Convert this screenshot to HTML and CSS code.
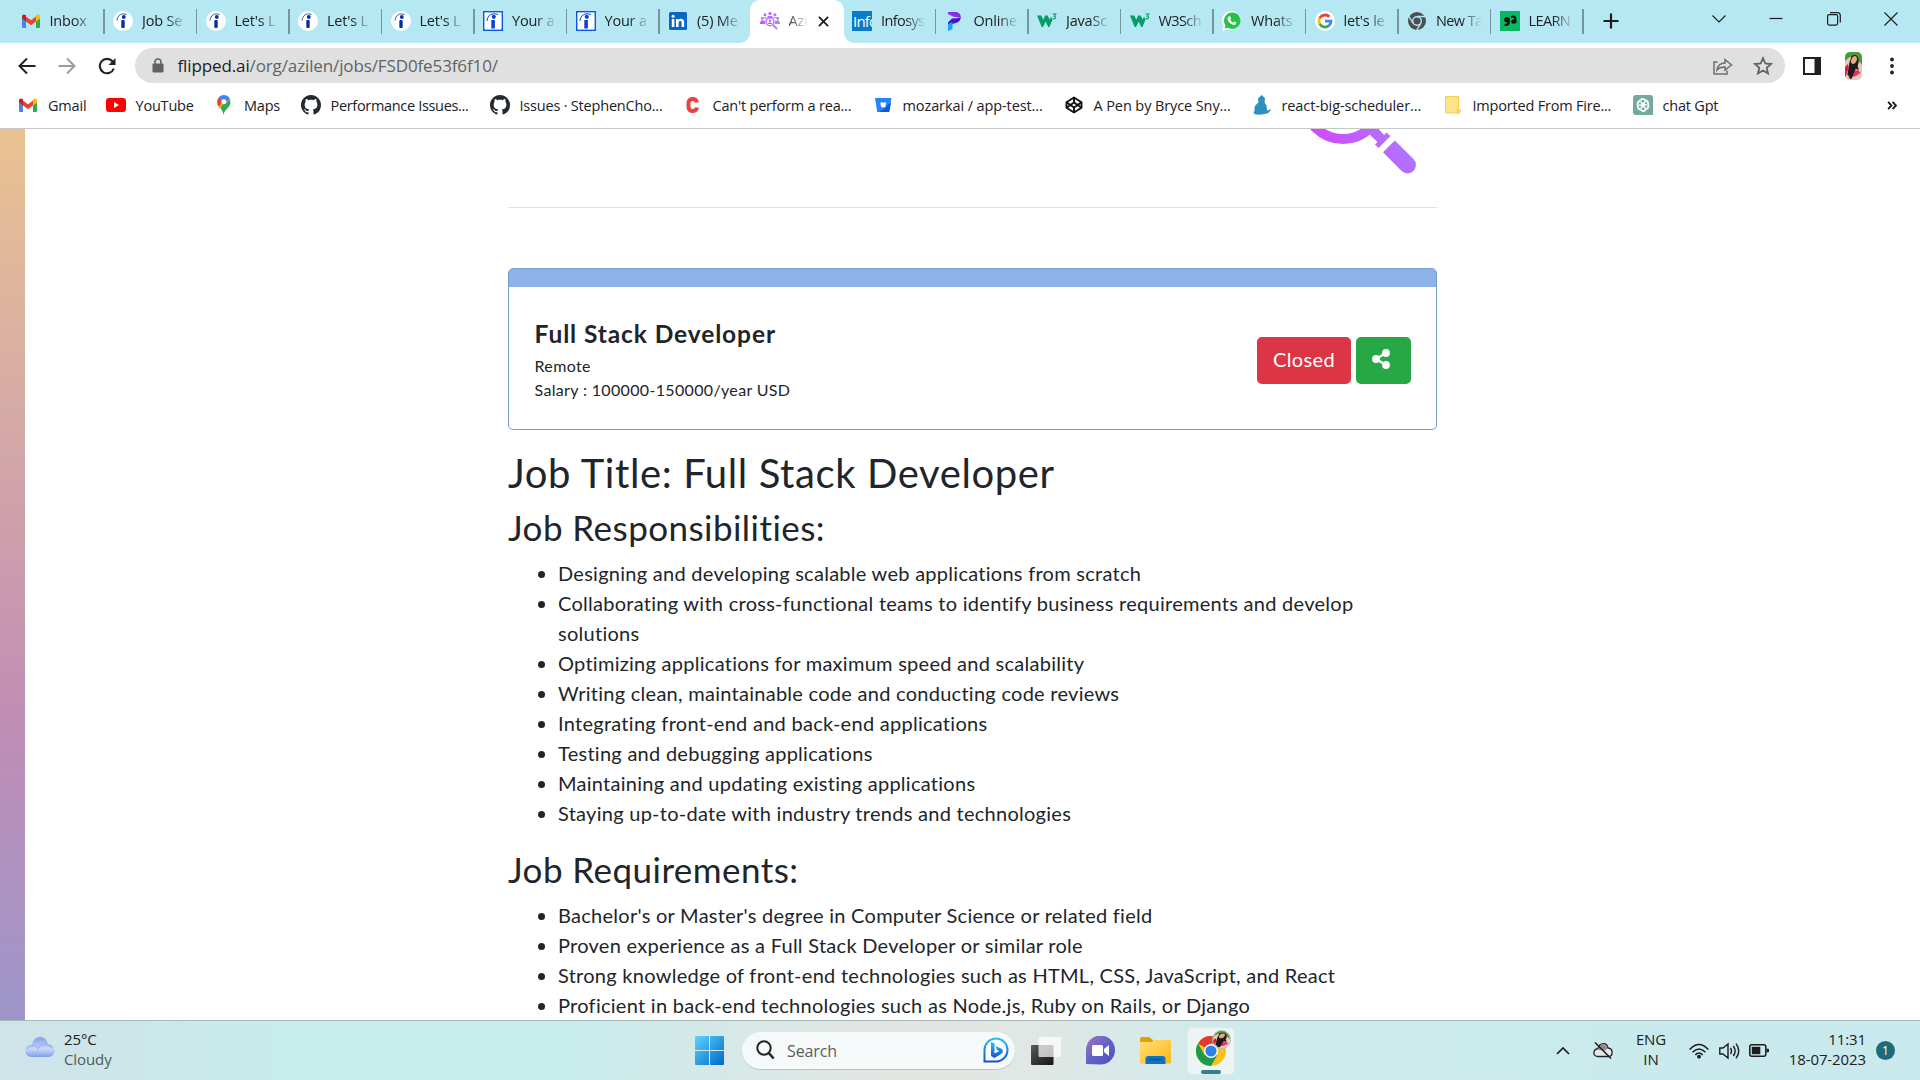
FILE: index.html
```html
<!DOCTYPE html>
<html lang="en">
<head>
<meta charset="utf-8">
<title>Azilen jobs</title>
<link rel="stylesheet" href="styles.css">
</head>
<body>
<svg class="defs" width="0" height="0" aria-hidden="true">
  <defs>
    <linearGradient id="gPink" x1="0" y1="0" x2="1" y2="0"><stop offset="0" stop-color="#e445ff"/><stop offset="1" stop-color="#7f9cff"/></linearGradient>
    <linearGradient id="gMag" gradientUnits="userSpaceOnUse" x1="1305" y1="165" x2="1400" y2="110"><stop offset="0" stop-color="#dc3cff"/><stop offset="1" stop-color="#a97cff"/></linearGradient>
    <linearGradient id="gCloud" x1="0" y1="0" x2="0" y2="1"><stop offset="0" stop-color="#7f9fe8"/><stop offset=".6" stop-color="#c9d9f8"/><stop offset="1" stop-color="#7ba0ea"/></linearGradient>
    <linearGradient id="gWin" x1="0" y1="0" x2="1" y2="1"><stop offset="0" stop-color="#5bd6ff"/><stop offset="1" stop-color="#0067c8"/></linearGradient>
    <linearGradient id="gBing" x1="0" y1="0" x2="0" y2="1"><stop offset="0" stop-color="#25c4ee"/><stop offset="1" stop-color="#174fcf"/></linearGradient>
    <linearGradient id="gChat" x1="0" y1="0" x2="1" y2="1"><stop offset="0" stop-color="#a173c4"/><stop offset=".5" stop-color="#6462c8"/><stop offset="1" stop-color="#4a4fbf"/></linearGradient>
    <linearGradient id="gFold" x1="0" y1="0" x2="1" y2="1"><stop offset="0" stop-color="#ffe07a"/><stop offset="1" stop-color="#fbb614"/></linearGradient>
    <linearGradient id="gDark" x1="0" y1="0" x2="1" y2="1"><stop offset="0" stop-color="#5a5a5a"/><stop offset="1" stop-color="#141414"/></linearGradient>
  </defs>
  <symbol id="gmail" viewBox="0 0 20 20">
    <path fill="#4285f4" d="M1 7l4 3v7H2.300Q1 17 1 15.700z"/><path fill="#34a853" d="M15 10l4-3v8.700Q19 17 17.700 17H15z"/>
    <path fill="#ea4335" d="M5 5.500l5 3.700 5-3.700v5l-5 3.800-5-3.800z"/><path fill="#c5221f" d="M1 5.500C1 3.300 3.200 2.700 5 4.300v6.200L1 7.500z"/>
    <path fill="#fbbc04" d="M19 5.500c0-2.200-2.200-2.800-4-1.200v6.200l4-3z"/>
  </symbol>
  <symbol id="indeed" viewBox="0 0 20 20">
    <circle cx="10" cy="10" r="10" fill="#fff"/><rect x="8.300" y="9" width="3.400" height="8" rx="1" fill="#0a2f9c"/><circle cx="10.800" cy="6" r="1.900" fill="#0a2f9c"/>
    <path d="M4 9.500C4.500 4 9 1.700 13.500 3.500" fill="none" stroke="#0a2f9c" stroke-width="1" opacity=".8"/>
  </symbol>
  <symbol id="indeedsq" viewBox="0 0 20 20">
    <rect x=".7" y=".7" width="18.600" height="18.600" fill="#fff" stroke="#0b55e8" stroke-width="1.400"/><rect x="8.300" y="9" width="3.600" height="8.500" fill="#0a45d8"/><circle cx="10.800" cy="5.800" r="2.100" fill="#0a45d8"/>
    <path d="M4 10C4.500 4 9 1.500 15 3.500" fill="none" stroke="#0a45d8" stroke-width="1"/>
  </symbol>
  <symbol id="linkedin" viewBox="0 0 20 20">
    <rect x="1" y="1" width="18" height="18" rx="1.500" fill="#0a66c2"/><path fill="#fff" d="M3.800 8h2.600v8H3.800zM8 8h2.500v1.200C11.800 7 16.200 7.300 16.200 11v5h-2.600v-4.300c0-2.400-3-2.200-3 0V16H8z"/><circle cx="5.100" cy="5.200" r="1.500" fill="#fff"/>
  </symbol>
  <symbol id="azilen" viewBox="0 0 20 20">
    <g fill="url(#gPink)"><circle cx="10" cy="2.600" r="1.700"/><circle cx="5" cy="3.700" r="1.500"/><circle cx="15" cy="3.700" r="1.500"/><circle cx="2.300" cy="7.300" r="1.400"/><circle cx="17.700" cy="7.300" r="1.400"/><path d="M0 13c0-2.500.7-3.700 2.500-3.800l2.500.8v3zM20 13c0-2.500-.7-3.700-2.500-3.800L15 10v3zM3.500 6h3L6 8zM13.500 6h3L14 8zM7.500 5h5v2h-5z"/></g>
    <circle cx="10" cy="10.800" r="4" fill="#fff" stroke="#b366ff" stroke-width="1.200"/><circle cx="10" cy="9.700" r="1.200" fill="#b366ff"/><path d="M7.700 13c.5-2 4.100-2 4.600 0z" fill="#d24cff"/><path d="M13 14l4 4" stroke="#a97cff" stroke-width="1.800"/>
  </symbol>
  <symbol id="programiz" viewBox="0 0 20 20">
    <path fill="#8a2be8" d="M3 1h7c4 0 6 2.500 5.800 6L8 5.500 3 3z"/><path fill="#4a12c8" d="M3 11.500l4-4L15.800 7c-.6 3-3 5-6.800 5.500L3 15z"/><path fill="#12a5f5" d="M3 13l4.500-2V18L3 20z"/>
  </symbol>
  <symbol id="w3" viewBox="0 0 20 20">
    <path fill="#059c68" d="M0 4.500h4.300l1.900 4.300 2-4.300h2.500l2 4.300 1.300-3.300 1.500 3-3 7.500h-1.300l-2.500-5.500L6 16H4.700z"/><path d="M15.500 3h3.300l-1.700 2.200c2.400.2 1.900 3.200-1.400 2.500" fill="none" stroke="#059c68" stroke-width="1.100"/>
  </symbol>
  <symbol id="whatsapp" viewBox="0 0 20 20">
    <path fill="#fff" d="M10 0a9.500 9.500 0 1 1-4.800 18.200L.2 20l1.500-5A9.500 9.500 0 0 1 10 0z"/><path fill="#25c244" d="M10.200 1.500a8.200 8.200 0 1 1-4.500 15L2.500 17.700l1-3.300a8.200 8.200 0 0 1 6.700-12.900z"/>
    <path fill="#fff" d="M7 5.300l1.400.2.700 2-.9 1.200c.7 1.500 1.700 2.300 3 2.900l1.100-1.100 2 .9c.1 2-1.700 2.900-3.200 2.400C8 12.800 6.300 10.800 5.700 8.500 5.400 7 6.100 5.900 7 5.300z"/>
  </symbol>
  <symbol id="google" viewBox="0 0 20 20">
    <circle cx="10" cy="10" r="10" fill="#fff"/><g fill="none" stroke-width="2.800"><path stroke="#ea4335" d="M14.300 5.800A6 6 0 0 0 4.700 7.200"/><path stroke="#fbbc04" d="M4.700 7.200a6 6 0 0 0 0 5.600"/><path stroke="#34a853" d="M4.700 12.800a6 6 0 0 0 9.200 1.800"/><path stroke="#4285f4" d="M13.900 14.600A6 6 0 0 0 16 10.200h-6"/></g>
  </symbol>
  <symbol id="chromegray" viewBox="0 0 20 20">
    <circle cx="10" cy="10" r="9" fill="#4b4f54"/><circle cx="10" cy="10" r="4.300" fill="#4b4f54" stroke="#b6e8f3" stroke-width="1.400"/><path d="M10 5.500h8.600M6 12.200L2 5.500M14 12.200l-4.300 7" stroke="#b6e8f3" stroke-width="1.300"/>
  </symbol>
  <symbol id="learn" viewBox="0 0 20 20">
    <rect width="20" height="20" fill="#07b763"/><g fill="none" stroke="#111" stroke-width="2.200"><circle cx="6.800" cy="8.700" r="1.500"/><path d="M8.700 7v4.500c0 2.300-2 2.500-4 2.500M11 6c3-1 4.300-.5 4.300 2v4.300"/><circle cx="13.300" cy="10.700" r="1"/></g>
  </symbol>
  <symbol id="youtube" viewBox="0 0 20 20"><rect y="3" width="20" height="14" rx="3" fill="#f00"/><path d="M8 7l5 3-5 3z" fill="#fff"/></symbol>
  <symbol id="maps" viewBox="0 0 20 20">
    <path fill="#34a853" d="M3.500 9c2 4 5.200 5 6 11 .8-6 7-7 7-13z"/><path fill="#fbbc04" d="M3.200 7.500L9 9l-3.300 5C4.500 12 3 10 3.200 7.500z"/><path fill="#ea4335" d="M5 2.200L9 7 5 11.500C2.500 8.500 2.800 4.500 5 2.200z"/><path fill="#4285f4" d="M4.800 2.300C8-1.200 14-.5 16 4l-6 5z"/><path fill="#34a853" d="M16 4c1.300 5-2.500 7-4.500 10L8 12z"/><circle cx="9.800" cy="6.700" r="2.500" fill="#fff"/>
  </symbol>
  <symbol id="github" viewBox="0 0 16 16"><path fill="#24292f" d="M8 0C3.580 0 0 3.580 0 8c0 3.540 2.290 6.530 5.470 7.590.4.070.55-.17.55-.38 0-.19-.01-.82-.01-1.490-2.010.37-2.530-.49-2.690-.94-.09-.23-.48-.94-.82-1.130-.28-.15-.68-.52-.01-.53.63-.01 1.080.58 1.230.82.72 1.210 1.870.87 2.330.66.07-.52.28-.87.51-1.070-1.780-.2-3.640-.89-3.640-3.950 0-.87.31-1.590.82-2.150-.08-.2-.36-1.020.08-2.120 0 0 .67-.21 2.200.82.64-.18 1.320-.27 2-.27s1.360.09 2 .27c1.530-1.040 2.200-.82 2.200-.82.44 1.100.16 1.920.08 2.120.51.560.82 1.270.82 2.150 0 3.070-1.870 3.750-3.650 3.950.29.25.54.73.54 1.480 0 1.070-.01 1.930-.01 2.200 0 .21.150.46.55.38A8.010 8.010 0 0 0 16 8c0-4.420-3.580-8-8-8z"/></symbol>
  <symbol id="cc" viewBox="0 0 20 20"><path d="M14 7.500C13.500 3 6 2.500 5.500 8v4c.5 5.500 8 5 8.500.5" fill="none" stroke="#ea4343" stroke-width="4"/></symbol>
  <symbol id="bitbucket" viewBox="0 0 20 20"><path fill="#2684ff" d="M2 3h16.500l-2.300 14H4.300z"/><path fill="#0b5bd3" d="M12.500 12L18 7.500 16.200 17H5z"/><path fill="#2684ff" d="M5 8h8.500l-1 5-6 4H4.300z"/><path fill="#fff" d="M7.300 7.500h5.900l-.9 4.800H8.200z"/></symbol>
  <symbol id="codepen" viewBox="0 0 20 20"><g fill="none" stroke="#111" stroke-width="1.900" stroke-linejoin="round"><path d="M10 2.500l7.500 4.700v5.600L10 17.500l-7.500-4.700V7.200z"/><path d="M2.500 7.200l7.500 5.300 7.500-5.300M2.500 12.800L10 7.500l7.500 5.300M10 2.500v5M10 12.500v5"/></g></symbol>
  <symbol id="rbs" viewBox="0 0 20 20"><path fill="#2e8fc0" d="M6 3.500L9.500 0l3 2.500c1.300 2-.5 3.500.3 5.500 1.700 2 2.500 4.500 2 7.500l4.700-1.200-3.500 4c-5 1.500-9.500 1.700-13.500 1L1.500 17c1.500-.5 1-1.500 1-4 .3-3 2.500-4 4-5.500z"/></symbol>
  <symbol id="folder" viewBox="0 0 20 20"><path fill="#ffe38a" stroke="#f3cb55" d="M2.500 1.500h13v13l2 1-1 2.500h-14z"/><path fill="#f8d25f" d="M13.500 18.500v-4.500h3.500v4.500z"/></symbol>
  <symbol id="gpt" viewBox="0 0 20 20"><path fill="#74aa9c" d="M3 0h14q3 0 3 3v17H3q-3 0-3-3V3q0-3 3-3z"/><g fill="none" stroke="#fff" stroke-width="1"><ellipse cx="8.200" cy="8.500" rx="3" ry="5.300" transform="rotate(25 8.200 8.500)"/><ellipse cx="11.800" cy="11.500" rx="3" ry="5.300" transform="rotate(25 11.800 11.500)"/><ellipse cx="10" cy="7.600" rx="3" ry="5.300" transform="rotate(85 10 7.600)"/><ellipse cx="10" cy="12.400" rx="3" ry="5.300" transform="rotate(85 10 12.400)"/><ellipse cx="12" cy="8.800" rx="3" ry="5.300" transform="rotate(-35 12 8.800)"/><ellipse cx="8" cy="11.200" rx="3" ry="5.300" transform="rotate(-35 8 11.200)"/></g></symbol>
  <symbol id="portrait" viewBox="0 0 18 28" preserveAspectRatio="none">
    <rect width="18" height="28" fill="#e0cfb4"/><path fill="#4e9a35" d="M0 0h18v13L12 6 5 5 0 9z"/><path fill="#231a1f" d="M7 4c5-3 8 1 7.500 6l-1 4 1 4-5-2-4 9-3-2 2-12z"/><ellipse cx="9.500" cy="8" rx="2.800" ry="4.200" fill="#e3aa8d" transform="rotate(25 9.500 8)"/><path fill="#e31b3c" d="M0 15l3-3 1 4-3.500 9H0z"/><path fill="#e8306b" d="M8 19l6-1 2.500 3-6 3.500H6z"/><path fill="#231a1f" d="M10 12l3 1-6 14-3-1z"/>
  </symbol>
</svg>

<header class="tabs">
  <div class="tab"><svg class="ico"><use href="#gmail"/></svg><span class="tab-title">Inbox</span></div>
  <div class="tab"><svg class="ico"><use href="#indeed"/></svg><span class="tab-title">Job Se</span></div>
  <div class="tab"><svg class="ico"><use href="#indeed"/></svg><span class="tab-title">Let's L</span></div>
  <div class="tab"><svg class="ico"><use href="#indeed"/></svg><span class="tab-title">Let's L</span></div>
  <div class="tab"><svg class="ico"><use href="#indeed"/></svg><span class="tab-title">Let's L</span></div>
  <div class="tab"><svg class="ico"><use href="#indeedsq"/></svg><span class="tab-title">Your a</span></div>
  <div class="tab"><svg class="ico"><use href="#indeedsq"/></svg><span class="tab-title">Your a</span></div>
  <div class="tab tab-last"><svg class="ico"><use href="#linkedin"/></svg><span class="tab-title">(5) Me</span></div>
  <div class="tab tab-active"><svg class="ico"><use href="#azilen"/></svg><span class="tab-title">Azi</span><svg class="tab-close" viewBox="0 0 12 12"><path d="M1 1l10 10M11 1L1 11" stroke="#1b1d1f" stroke-width="2"/></svg></div>
  <div class="tab"><span class="ico infosys">Info</span><span class="tab-title tight">Infosys</span></div>
  <div class="tab"><svg class="ico"><use href="#programiz"/></svg><span class="tab-title">Online</span></div>
  <div class="tab"><svg class="ico"><use href="#w3"/></svg><span class="tab-title">JavaSc</span></div>
  <div class="tab"><svg class="ico"><use href="#w3"/></svg><span class="tab-title tight">W3Sch</span></div>
  <div class="tab"><svg class="ico"><use href="#whatsapp"/></svg><span class="tab-title">Whats</span></div>
  <div class="tab"><svg class="ico"><use href="#google"/></svg><span class="tab-title">let's le</span></div>
  <div class="tab"><svg class="ico"><use href="#chromegray"/></svg><span class="tab-title tight">New Ta</span></div>
  <div class="tab"><svg class="ico"><use href="#learn"/></svg><span class="tab-title tight">LEARN</span></div>
  <svg class="newtab" viewBox="0 0 16 16"><path d="M8 .5v15M.5 8h15" stroke="#1b1d1f" stroke-width="2.200"/></svg>
  <div class="winctl">
    <svg width="14" height="14" viewBox="0 0 14 14"><path d="M.5 3.500L7 10l6.500-6.500"/></svg>
    <svg width="14" height="14" viewBox="0 0 14 14"><path d="M.5 6.500h13"/></svg>
    <svg width="14" height="14" viewBox="0 0 14 14"><rect x=".6" y="2.600" width="10" height="10.500" rx="1.500"/><path d="M3 .6h7.500q2.800 0 2.800 3v7"/></svg>
    <svg width="14" height="14" viewBox="0 0 14 14"><path d="M.5.5l13 13M13.500.5l-13 13"/></svg>
  </div>
</header>

<div class="toolbar">
  <svg class="nav" viewBox="0 0 18 18"><path d="M17.500 9H2M9 1.500L1.500 9 9 16.500" fill="none" stroke="#202124" stroke-width="2"/></svg>
  <svg class="nav" viewBox="0 0 18 18"><path d="M.5 9H16M9 1.500L16.500 9 9 16.500" fill="none" stroke="#9b9c9e" stroke-width="2"/></svg>
  <svg class="nav" viewBox="0 0 18 18"><path d="M15.800 11.500A7.200 7.200 0 1 1 14.600 4.500" fill="none" stroke="#202124" stroke-width="2.100"/><path d="M17.500 1v7h-7z" fill="#202124"/></svg>
  <div class="omnibox">
    <svg class="lock" viewBox="0 0 12 15"><rect x=".5" y="5.500" width="11" height="9" rx="1.200" fill="#5f6368"/><path d="M3 6V4q0-3 3-3t3 3v2" fill="none" stroke="#5f6368" stroke-width="1.600"/></svg>
    <span class="url"><b>flipped.ai</b>/org/azilen/jobs/FSD0fe53f6f10/</span>
    <svg class="share" viewBox="0 0 20 18"><path d="M4.500 5H1v12h13v-3.500M4 13c.8-5 4-7 8-7V2.500L18.500 8 12 13v-3c-3.500 0-6 .7-8 3z" fill="none" stroke="#6b6e72" stroke-width="1.500"/></svg>
    <svg class="star" viewBox="0 0 20 20"><path d="M10 2.200l2.300 5.300 5.800.5-4.400 3.800 1.300 5.700-5-3-5 3 1.300-5.700L1.900 8l5.800-.5z" fill="none" stroke="#5f6368" stroke-width="1.800"/></svg>
  </div>
  <svg class="panel" viewBox="0 0 18 18"><rect x="1" y="1" width="16" height="16" fill="none" stroke="#202124" stroke-width="2"/><path d="M11.500 1H17v16h-5.500z" fill="#202124"/></svg>
  <svg class="avatar"><use href="#portrait"/></svg>
  <svg class="dots" viewBox="0 0 4 18"><g fill="#202124"><circle cx="2" cy="2.500" r="1.900"/><circle cx="2" cy="9" r="1.900"/><circle cx="2" cy="15.500" r="1.900"/></g></svg>
</div>

<nav class="bookmarks">
  <span class="bm"><svg class="ico"><use href="#gmail"/></svg>Gmail</span>
  <span class="bm"><svg class="ico"><use href="#youtube"/></svg>YouTube</span>
  <span class="bm"><svg class="ico"><use href="#maps"/></svg>Maps</span>
  <span class="bm tight"><svg class="ico"><use href="#github"/></svg>Performance Issues...</span>
  <span class="bm"><svg class="ico"><use href="#github"/></svg>Issues · StephenCho...</span>
  <span class="bm"><svg class="ico"><use href="#cc"/></svg>Can't perform a rea...</span>
  <span class="bm loose"><svg class="ico"><use href="#bitbucket"/></svg>mozarkai / app-test...</span>
  <span class="bm loose"><svg class="ico"><use href="#codepen"/></svg>A Pen by Bryce Sny...</span>
  <span class="bm loose"><svg class="ico"><use href="#rbs"/></svg>react-big-scheduler...</span>
  <span class="bm"><svg class="ico"><use href="#folder"/></svg>Imported From Fire...</span>
  <span class="bm"><svg class="ico"><use href="#gpt"/></svg>chat Gpt</span>
  <svg class="more" viewBox="0 0 9 8"><path d="M1 .7L4 4 1 7.300M5 .7L8 4 5 7.300" fill="none" stroke="#202124" stroke-width="1.700"/></svg>
</nav>

<div class="viewport">
  <div class="strip"></div>
  <main class="page">
    <div class="hero">
      <svg class="magnifier" viewBox="1300 129 120 46">
        <circle cx="1343" cy="100.500" r="38.500" fill="none" stroke="url(#gMag)" stroke-width="10"/>
        <g fill="url(#gMag)"><path d="M1369 134l7-8 8 9 2.500-2.500 4 3.500-12 12-3.500-3.500 2.500-2.500z"/><path d="M1383 152.200l11.800-11.800 18.700 18.700a8.400 8.400 0 0 1-11.900 11.900z"/></g>
      </svg>
    </div>
    <section class="card">
      <div class="card-head"></div>
      <div class="card-body">
        <div class="job">
          <h5 class="job-name">Full Stack Developer</h5>
          <div class="meta">Remote</div>
          <div class="meta">Salary : 100000-150000/year USD</div>
        </div>
        <div class="actions">
          <button class="btn btn-closed">Closed</button>
          <button class="btn btn-share"><svg width="18" height="20" viewBox="0 0 18 20"><path d="M14 4L4 10l10 6" fill="none" stroke="#fff" stroke-width="2.600"/><g fill="#fff"><circle cx="14" cy="4" r="3.900"/><circle cx="4" cy="10" r="3.900"/><circle cx="14" cy="16" r="3.900"/></g></svg></button>
        </div>
      </div>
    </section>
    <article class="desc">
      <h1>Job Title: Full Stack Developer</h1>
      <h2>Job Responsibilities:</h2>
      <ul>
        <li>Designing and developing scalable web applications from scratch</li>
        <li>Collaborating with cross-functional teams to identify business requirements and develop solutions</li>
        <li>Optimizing applications for maximum speed and scalability</li>
        <li>Writing clean, maintainable code and conducting code reviews</li>
        <li>Integrating front-end and back-end applications</li>
        <li>Testing and debugging applications</li>
        <li>Maintaining and updating existing applications</li>
        <li>Staying up-to-date with industry trends and technologies</li>
      </ul>
      <h2 class="req">Job Requirements:</h2>
      <ul>
        <li>Bachelor's or Master's degree in Computer Science or related field</li>
        <li>Proven experience as a Full Stack Developer or similar role</li>
        <li>Strong knowledge of front-end technologies such as HTML, CSS, JavaScript, and React</li>
        <li>Proficient in back-end technologies such as Node.js, Ruby on Rails, or Django</li>
      </ul>
    </article>
  </main>
</div>

<footer class="taskbar">
  <div class="weather">
    <svg width="30" height="20" viewBox="0 0 30 20"><path fill="url(#gCloud)" d="M7 20c-9 0-9-12 0-12C8-2 21-3 23 7c9 0 9 13 0 13z"/><path d="M2 12c3-5 9-4 11 0 2-5 9-7 14-1" fill="none" stroke="#8caaf0" stroke-width="1.500" opacity=".6"/></svg>
    <div class="two-line"><span>25°C</span><span class="muted">Cloudy</span></div>
  </div>
  <div class="apps">
    <svg width="29" height="29" viewBox="0 0 29 29"><path fill="url(#gWin)" d="M1 0h13v14H0V1q0-1 1-1zM15 0h13q1 0 1 1v13H15zM0 15h14v14H1q-1 0-1-1zM15 15h14v13q0 1-1 1H15z"/></svg>
    <div class="search">
      <svg width="19" height="20" viewBox="0 0 19 20"><circle cx="8" cy="8" r="6.700" fill="none" stroke="#252525" stroke-width="2"/><path d="M12.700 13l5 5.500" stroke="#252525" stroke-width="2.600"/></svg>
      <span>Search</span>
      <svg class="bing" width="26" height="26" viewBox="0 0 26 26"><path d="M1.500 24.500V13A11.500 11.500 0 1 1 13 24.500z" fill="#f7fbfd" stroke="url(#gBing)" stroke-width="2"/><path fill="url(#gBing)" d="M8 5l3.500 1.500v10l5-2.500-2.500-1-1.500-4 6.500 3q2 3-1 5l-6.500 4L8 19z"/></svg>
    </div>
    <svg width="30" height="28" viewBox="0 0 30 28"><rect y="8" width="22.500" height="20" rx="1" fill="url(#gDark)"/><rect x="7.500" width="22.500" height="20" rx="1" fill="#fff" opacity=".72"/></svg>
    <svg width="29" height="29" viewBox="0 0 29 29"><path fill="url(#gChat)" d="M0 28V14.500A14.500 14.500 0 1 1 14.500 28.500z"/><rect x="6" y="9" width="11" height="11" rx="1.500" fill="#fff"/><path fill="#fff" d="M18 13l5-4v11l-5-4z"/></svg>
    <svg width="31" height="27" viewBox="0 0 31 27"><path fill="#dea107" d="M0 2q0-2 2-2h7l4 3v3H0z"/><path fill="url(#gFold)" d="M0 5h12l2-2h17v22q0 1.500-1.500 1.500h-28Q0 26.500 0 25z"/><path fill="#0f72c9" d="M5.500 27v-5q0-3 3-3h14q3 0 3 3v5z"/><path d="M9 22.500h13" stroke="#0a4f93" stroke-width="1.500"/></svg>
    <div class="tile">
      <svg width="30" height="30" viewBox="0 0 30 30"><circle cx="15" cy="15" r="15" fill="#fbc116"/><path fill="#e33b2e" d="M15 15L2 7.500A15 15 0 0 1 28 7.500H15z"/><path fill="#1f9b4b" d="M2 7.500A15 15 0 0 0 15 30l6.500-11.300L15 15 8.500 18.700z"/><circle cx="15" cy="15" r="7" fill="#fff"/><circle cx="15" cy="15" r="5.600" fill="#2f80f3"/></svg>
      <span class="mini"><svg width="17" height="17"><use href="#portrait"/></svg></span>
      <span class="running"></span>
    </div>
  </div>
  <div class="tray">
    <svg class="t-chev" width="14" height="8" viewBox="0 0 14 8"><path d="M1 7l6-6 6 6" fill="none" stroke="#1c1c1c" stroke-width="1.700"/></svg>
    <svg class="t-cloud" width="20" height="17" viewBox="0 0 20 17"><path fill="#e8e8e8" stroke="#222" stroke-width="1.300" d="M5 14.500c-5.500 0-5.500-7 0-8C6.500 0 14 0 15 6c5.500.5 5.500 8.500 0 8.500z"/><path fill="#8b8b8b" d="M5 7.500C6.500 1 13 1 14.300 6.700L11 9z"/><path d="M2 .5L18 16.500" stroke="#222" stroke-width="1.500"/></svg>
    <div class="two-line lang"><span>ENG</span><span>IN</span></div>
    <svg class="t-wifi" width="20" height="16" viewBox="0 0 20 16"><g fill="none" stroke="#1c1c1c" stroke-width="1.500"><path d="M.6 6.500Q10-3.500 19.400 6.500M3.500 9.300Q10 2.500 16.500 9.300M6.300 12Q10 8.200 13.700 12"/></g><circle cx="10" cy="13.700" r="1.900" fill="#1c1c1c"/></svg>
    <svg class="t-vol" width="21" height="18" viewBox="0 0 21 18"><g fill="none" stroke="#1c1c1c" stroke-width="1.400"><path d="M.8 6v6H4l5 4V2L4 6zM11.500 6q2 3 0 6M14.300 4q3.700 5 0 10M17 1.700q5.500 7.300 0 14.600"/></g></svg>
    <svg class="t-bat" width="20" height="13" viewBox="0 0 20 13"><rect x=".8" y=".8" width="16" height="11.400" rx="2" fill="none" stroke="#1c1c1c" stroke-width="1.500"/><rect x="2.800" y="2.800" width="8.500" height="7.400" fill="#1c1c1c"/><path d="M17.500 4.500l2.500.5v3l-2.500.5z" fill="#1c1c1c"/></svg>
    <div class="two-line clock"><span>11:31</span><span>18-07-2023</span></div>
    <span class="badge">1</span>
  </div>
</footer>
</body>
</html>
```
FILE: styles.css
```css
* { box-sizing: border-box; }
body {
  margin: 0;
  width: 1920px;
  height: 1080px;
  overflow: hidden;
  display: flex;
  flex-direction: column;
  background: #fff;
  font-family: "Open Sans", "Noto Sans", sans-serif;
  font-size: 14.5px;
  letter-spacing: -0.2px;
  color: #202124;
}
svg { display: block; flex: none; }
.defs { position: absolute; }
.ico { width: 20px; height: 20px; flex: none; }

/* Tab strip */
.tabs {
  display: flex;
  height: 43px;
  flex: none;
  padding-left: 11px;
  background: #b6e8f3;
}
.tab {
  position: relative;
  width: 92.5px;
  flex: none;
  display: flex;
  align-items: center;
  gap: 9px;
  padding: 0 8px 1px 9.5px;
}
.tab::after {
  content: "";
  position: absolute;
  right: -1px;
  top: 9px;
  width: 1.5px;
  height: 25px;
  background: #76969f;
}
.tab-last::after, .tab-active::after { display: none; }
.tab-title {
  flex: 1;
  padding-bottom: 1px;
  white-space: nowrap;
  -webkit-mask-image: linear-gradient(90deg, #000 calc(100% - 22px), transparent calc(100% - 1px));
  mask-image: linear-gradient(90deg, #000 calc(100% - 22px), transparent calc(100% - 1px));
}
.tab-title.tight { letter-spacing: -0.6px; }
.tab-active {
  background: #fff;
  border-radius: 10px 10px 0 0;
  width: 94px;
  margin-right: -1.5px;
  margin-left: -1px;
  padding-right: 15px;
}
.tab-active::before {
  content: "";
  position: absolute;
  left: -10px;
  right: -10px;
  bottom: 0;
  height: 10px;
  background:
    radial-gradient(circle at 0 0, transparent 9.5px, #fff 10px) left / 10px 10px no-repeat,
    radial-gradient(circle at 100% 0, transparent 9.5px, #fff 10px) right / 10px 10px no-repeat;
}
.tab-close { width: 11px; height: 11px; }
.infosys {
  background: #0a7cc5;
  color: #fff;
  font: 15px/20px "Open Sans", sans-serif;
  letter-spacing: -0.8px;
  overflow: hidden;
  padding-left: 1px;
}
.newtab { width: 16px; height: 16px; margin: 13px 0 0 20px; }
.winctl {
  display: flex;
  gap: 43.4px;
  margin: 12px 22px 0 auto;
  fill: none;
  stroke: #1d1f20;
  stroke-width: 1.2;
}

/* Toolbar */
.toolbar {
  display: flex;
  align-items: center;
  height: 45px;
  flex: none;
  padding: 0 26px 0 18px;
}
.nav { width: 18px; height: 18px; margin-right: 22px; }
.omnibox {
  display: flex;
  align-items: center;
  width: 1650px;
  height: 35px;
  margin-left: -3px;
  padding: 0 12px 0 17px;
  border-radius: 18px;
  background: #e0e0e0;
}
.lock { width: 12px; height: 15px; }
.url {
  flex: 1;
  margin-left: 13.5px;
  font-size: 17px;
  letter-spacing: -0.12px;
  color: #5f6368;
}
.url b { font-weight: 400; color: #202124; }
.share { width: 20px; height: 18px; margin-right: 20px; }
.star { width: 20px; height: 20px; }
.panel { width: 18px; height: 18px; margin-left: 18px; }
.avatar { width: 17px; height: 28px; margin-left: 24px; border-radius: 5px; }
.dots { width: 4px; height: 18px; margin-left: auto; }

/* Bookmarks bar */
.bookmarks {
  display: grid;
  grid-template-columns: 87.5px 108.5px 86.5px 189px 193px 190px 191px 188px 191px 190px 254px auto;
  align-items: center;
  height: 41px;
  flex: none;
  padding: 0 0 6px 18px;
  border-bottom: 1px solid #c8c8c8;
}
.bm { display: flex; align-items: center; gap: 10px; white-space: nowrap; }
.bm.tight { letter-spacing: -0.32px; }
.bm.loose { letter-spacing: -0.1px; }
.more { width: 10px; height: 9px; }

/* Page */
.viewport { display: flex; height: 891px; overflow: hidden; }
.strip {
  width: 25px;
  flex: none;
  background: linear-gradient(#eac291, #d6aca5 30%, #bf8db5 67%, #9d96ca);
}
.page {
  width: 929px;
  margin-left: 483px;
  font-family: Lato, "Noto Sans", sans-serif;
  letter-spacing: 0.27px;
  color: #212529;
}
.hero {
  display: flex;
  justify-content: flex-end;
  height: 79px;
  border-bottom: 1px solid #e3e3e3;
}
.magnifier { width: 120px; height: 46px; margin-right: 17px; }
.card {
  height: 162px;
  margin-top: 60px;
  border: 1px solid #7a9ccb;
  border-radius: 5px;
  overflow: hidden;
}
.card-head { height: 18px; background: #8cb2e7; }
.card-body {
  display: flex;
  justify-content: space-between;
  padding: 32px 25px 0 25.5px;
}
.job-name {
  margin: 0 0 5px;
  font-size: 24.5px;
  line-height: 30px;
  font-weight: 700;
  letter-spacing: 0.9px;
}
.meta { font-size: 16px; line-height: 24px; letter-spacing: 0.34px; }
.actions { display: flex; gap: 5px; padding-top: 18px; }
.btn {
  height: 47px;
  border: 0;
  border-radius: 5px;
  padding: 0 0 4px;
  color: #fff;
  font: 20px Lato, sans-serif;
  letter-spacing: 0.35px;
}
.btn-closed { width: 94px; background: #dc3545; }
.btn-share { width: 55px; background: #28a745; padding: 0 0 3px 16px; }
h1, h2 { margin: 0 0 10px; font-weight: 400; line-height: 1.2; }
h1 { margin-bottom: 9px; font-size: 40px; letter-spacing: 0.6px; }
h2 { font-size: 35px; letter-spacing: 0.45px; }
.desc { padding-top: 19px; }
.req { margin-top: 20px; }
ul { margin: 0; padding-left: 50px; font-size: 20px; line-height: 30px; }

/* Taskbar */
.taskbar {
  position: relative;
  display: grid;
  grid-template-columns: 695px 1fr auto;
  height: 60px;
  flex: none;
  border-top: 1px solid #a6b8b8;
  background: linear-gradient(90deg, #cfe3e8, #c8ebec 14%, #c9ecec 30%, #e3e5e2 46%, #e0e7e4 54%, #cdebed 65%, #c9e9ec);
  font-size: 15px;
  letter-spacing: -0.1px;
}
.weather { display: flex; gap: 9px; padding: 8px 0 0 25px; }
.weather svg { margin-top: 8px; }
.two-line { display: flex; flex-direction: column; line-height: 20px; }
.muted { color: #4d5c5e; }
.apps { display: flex; align-items: center; }
.apps > svg { margin-right: 25px; }
.apps > svg:first-child { margin-right: 18px; }
.search {
  display: flex;
  align-items: center;
  width: 273px;
  height: 38px;
  margin-right: 16px;
  padding: 0 6px 0 14px;
  border-radius: 19px;
  border-bottom: 1px solid #b9c1c0;
  background: #f5f9f9;
  font-size: 16px;
  color: #5a5d5d;
}
.search span { margin-left: 12px; flex: 1; padding-top: 1px; }
.tile {
  position: relative;
  width: 48px;
  height: 48px;
  margin-left: -9px;
  padding: 9px;
  border-radius: 5px;
  border: 1px solid #e1eaea;
  background: #edf4f4;
}
.tile > svg { margin: -1px; }
.mini {
  position: absolute;
  left: 24px;
  top: 2px;
  width: 19px;
  height: 19px;
  border-radius: 50%;
  border: 1px solid #b9b9b9;
  overflow: hidden;
}
.running {
  position: absolute;
  left: 13px;
  bottom: 0;
  width: 20px;
  height: 4px;
  border-radius: 2px;
  background: #2c8290;
}
.tray { display: flex; align-items: center; padding-right: 25px; }
.tray .two-line { padding-bottom: 3px; }
.t-cloud { margin-left: 23px; }
.lang { width: 76px; text-align: center; }
.t-vol { margin-left: 10px; }
.t-bat { margin-left: 9px; }
.clock { width: 97px; text-align: right; }
.badge {
  width: 19px;
  height: 19px;
  margin-left: 10px;
  border-radius: 50%;
  background: #1f6c79;
  color: #fff;
  font-size: 12px;
  line-height: 19px;
  text-align: center;
}
```
